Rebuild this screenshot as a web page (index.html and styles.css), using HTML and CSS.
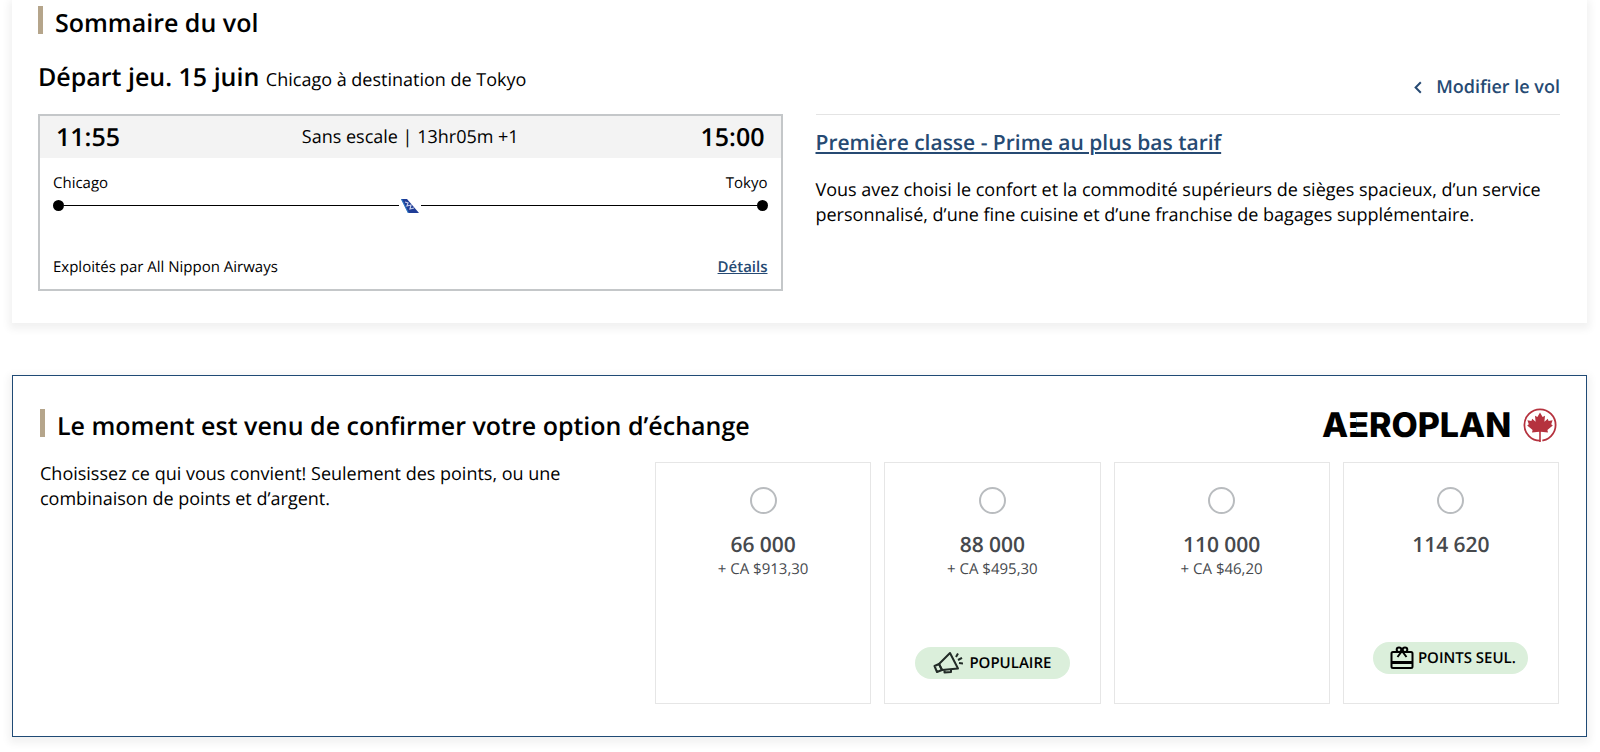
FILE: index.html
```html
<!DOCTYPE html>
<html lang="fr">
<head>
  <meta charset="UTF-8">
  <meta name="viewport" content="width=device-width, initial-scale=1.0">
  <title>Sommaire du vol</title>
  <link rel="stylesheet" href="styles.css">
</head>
<body>

<main>

  <!-- Flight summary -->
  <section class="card summary">
    <h2 class="title">Sommaire du vol</h2>
    <div class="summary-head">
      <h3 class="departure">Départ jeu. 15 juin <span>Chicago à destination de Tokyo</span></h3>
      <a class="modify" href="#modifier">
        <svg width="8" height="13" viewBox="0 0 8 13" aria-hidden="true"><path d="M6.8 1.2 1.6 6.5l5.2 5.3" fill="none" stroke="currentColor" stroke-width="2"/></svg>
        Modifier le vol
      </a>
    </div>

    <div class="columns">
      <div class="flight">
        <div class="flight-times">
          <strong>11:55</strong>
          <span>Sans escale | 13hr05m +1</span>
          <strong>15:00</strong>
        </div>
        <div class="flight-body">
          <div class="row"><span>Chicago</span><span>Tokyo</span></div>
          <div class="route">
            <i class="dot"></i>
            <i class="line"></i>
            <svg width="20" height="16" viewBox="0 0 20 16" aria-hidden="true">
              <path d="M1 1h6l12 14H8z" fill="#1f3c96"/>
              <path d="M1 1h1l7 14H8z" fill="#2f83cc"/>
              <path d="m5 4 3 1-1 3 4-1-1 4 4-1" fill="none" stroke="#c6cfea" stroke-width="1.2"/>
            </svg>
            <i class="line"></i>
            <i class="dot"></i>
          </div>
          <div class="row operator"><span>Exploités par All Nippon Airways</span><a href="#details">Détails</a></div>
        </div>
      </div>

      <div class="fare">
        <a class="fare-name" href="#tarif">Première classe - Prime au plus bas tarif</a>
        <p>Vous avez choisi le confort et la commodité supérieurs de sièges spacieux, d’un service personnalisé, d’une fine cuisine et d’une franchise de bagages supplémentaire.</p>
      </div>
    </div>
  </section>

  <!-- Redemption options -->
  <section class="card redeem">
    <div class="redeem-head">
      <h2 class="title">Le moment est venu de confirmer votre option d’échange</h2>
      <svg class="logo" width="238" height="36" viewBox="0 0 238 36" role="img" aria-label="Aeroplan">
        <text class="wordmark" x="1" y="28">AEROPLAN</text>
        <path d="M26 9h9v4h-9zM26 19h9v4h-9z" fill="#fff"/>
        <circle cx="219" cy="16" r="15.600" fill="none" stroke="#b5323e" stroke-width="1.800"/>
        <path d="m219 3.500 2.600 4.500 2.400-1.200-.6 6 3.400-3 .8 2.200 4-.8-1.400 4 1.600 1.200-5.400 4.600.6 2.500-7.300-.7-.7.500-.7-.5-7.300.7.600-2.500-5.400-4.600 1.600-1.200-1.400-4 4 .8.800-2.200 3.400 3-.6-6 2.400 1.200z" fill="#b5323e"/>
        <path d="M220.300 29v5" stroke="#fff" stroke-width="2"/>
        <path d="M219 21v12" stroke="#b5323e" stroke-width="1.600"/>
      </svg>
    </div>

    <div class="redeem-body">
      <p>Choisissez ce qui vous convient! Seulement des points, ou une combinaison de points et d’argent.</p>
      <div class="options">
        <label class="option">
          <input type="radio" name="points" value="66000">
          <strong>66 000</strong>
          <span>+ CA $913,30</span>
        </label>
        <label class="option">
          <input type="radio" name="points" value="88000">
          <strong>88 000</strong>
          <span>+ CA $495,30</span>
          <em class="tag">
            <svg width="30" height="24" viewBox="0 0 30 24" fill="none" stroke="#222b27" stroke-width="2" stroke-linejoin="round" aria-hidden="true">
              <path d="M6 13 17 2l8 15.500-16 1.500z"/>
              <path d="m6 13-4.500 2L4 21l5-2z"/>
              <path d="M11.500 19.500v2l6.500-.5v-2.500"/>
              <path d="m23 6 2-3.500M25 9l4-2.200M26 12l4 .5"/>
            </svg>
            POPULAIRE
          </em>
        </label>
        <label class="option">
          <input type="radio" name="points" value="110000">
          <strong>110 000</strong>
          <span>+ CA $46,20</span>
        </label>
        <label class="option">
          <input type="radio" name="points" value="114620">
          <strong>114 620</strong>
          <em class="tag tag-gift">
            <svg width="24" height="24" viewBox="0 0 24 24" fill="none" stroke="#000" stroke-width="2" aria-hidden="true">
              <rect x="1.500" y="6" width="21" height="16" rx="1.500"/>
              <path d="M1 16.500h22" stroke-width="3"/>
              <circle cx="9" cy="3.800" r="2.300"/>
              <circle cx="15" cy="3.800" r="2.300"/>
              <path d="m12 5-4.500 6M12 5l4.500 6"/>
            </svg>
            POINTS SEUL.
          </em>
        </label>
      </div>
    </div>
  </section>

</main>

</body>
</html>
```
FILE: styles.css
```css
* { box-sizing: border-box; }
body { margin: 0; background: #fff; color: #000; font-family: "Open Sans", sans-serif; font-size: 18px; line-height: 25px; text-rendering: geometricPrecision; }
main { padding: 0 13px 15px 12px; }
h2, h3, p { margin: 0; }
a { color: #264a73; font-weight: 600; }

.card { background: #fff; box-shadow: 0 3px 8px 3px rgba(0, 0, 0, 0.06); }
.title { display: flex; font-size: 25px; font-weight: 600; line-height: 34px; }
.title::before { content: ""; width: 5px; height: 28px; margin-right: 12px; background: #b5a58b; }

/* Flight summary */
.summary { padding: 6px 27px 32px 26px; margin-bottom: 52px; }
.summary-head { display: flex; justify-content: space-between; align-items: center; padding-top: 17px; margin-bottom: 14px; }
.departure { font-size: 25px; font-weight: 600; line-height: 38px; }
.departure span { font-size: 18px; font-weight: 400; }
.modify { display: flex; align-items: center; gap: 14px; padding-top: 18px; text-decoration: none; }
.columns { display: grid; grid-template-columns: 1fr 1fr; gap: 33px; }

.flight { border: 2px solid #c4c7c9; }
.flight-times { display: grid; grid-template-columns: 1fr auto 1fr; align-items: center; height: 42px; padding: 0 16px; background: #f3f3f3; }
.flight-times strong { font-size: 25px; font-weight: 600; }
.flight-times strong:last-child { text-align: right; }
.flight-body { padding: 13px 13px 9px; font-size: 15px; }
.row { display: flex; justify-content: space-between; }
.route { display: flex; align-items: center; height: 19px; }
.route svg { margin: 0 1px; }
.dot { width: 11px; height: 11px; border-radius: 50%; background: #000; }
.line { flex: 1; height: 1px; background: #000; }
.operator { margin-top: 40px; }

.fare { border-top: 1px solid #e4e4e4; padding-top: 14px; }
.fare-name { display: block; margin-bottom: 21px; font-size: 21px; line-height: 28px; }

/* Redemption options */
.redeem { padding: 33px 27px 32px; border: 1px solid #1f4a75; }
.redeem-head { display: flex; justify-content: space-between; height: 53px; }
.logo { overflow: visible; }
.wordmark { font-family: Inter, sans-serif; font-size: 34px; font-weight: 800; }
.redeem-body { display: flex; justify-content: space-between; }
.redeem-body p { width: 540px; }
.options { display: grid; grid-template-columns: repeat(4, 1fr); gap: 13px; width: 904px; }
.option { display: flex; flex-direction: column; align-items: center; height: 242px; padding: 24px 0; border: 1px solid #e6e6e6; color: #46494d; }
.option input { appearance: none; width: 27px; height: 27px; margin: 0 0 17px; border: 2px solid #b9bcbf; border-radius: 50%; background: #fff; }
.option strong { font-size: 21px; font-weight: 600; line-height: 28px; }
.option span { font-size: 15px; line-height: 20px; }
.tag { display: flex; align-items: center; justify-content: center; gap: 6px; width: 155px; height: 32px; margin-top: auto; border-radius: 16px; background: #dbefdb; color: #000; font-size: 15px; font-style: normal; font-weight: 600; }
.tag-gift { gap: 4px; padding-left: 4px; margin-bottom: 5px; }
```
